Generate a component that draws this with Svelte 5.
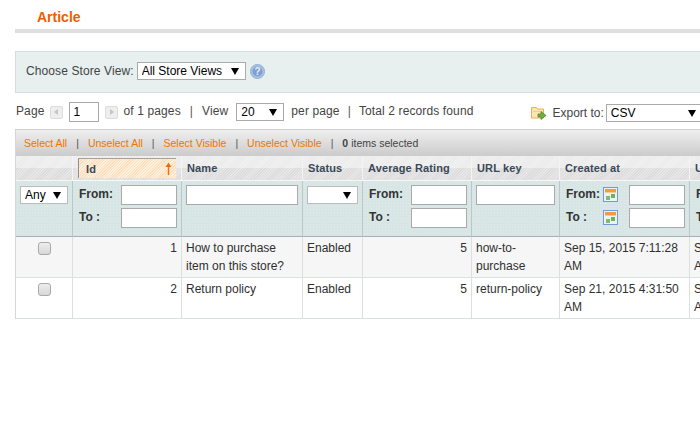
<script>
    const columns = [
        { name: "", width: 57 },
        { name: "Id", width: 109, sorted: true },
        { name: "Name", width: 121 },
        { name: "Status", width: 60 },
        { name: "Average Rating", width: 109 },
        { name: "URL key", width: 88 },
        { name: "Created at", width: 130 },
        { name: "Updated at", width: 130 }
    ];

    const rows = [
        {
            id: 1,
            name: "How to purchase item on this store?",
            status: "Enabled",
            rating: 5,
            url: "how-to-purchase",
            created: "Sep 15, 2015 7:11:28 AM",
            updated: "Sep 15, 2015 7:11:28 AM"
        },
        {
            id: 2,
            name: "Return policy",
            status: "Enabled",
            rating: 5,
            url: "return-policy",
            created: "Sep 21, 2015 4:31:50 AM",
            updated: "Sep 21, 2015 4:31:50 AM"
        }
    ];

    const massActions = ["Select All", "Unselect All", "Select Visible", "Unselect Visible"];
</script>

{#snippet calendar()}
    <svg class="cal" width="15" height="15" viewBox="0 0 15 15">
        <rect x="0.5" y="0.5" width="14" height="14" fill="#eef2f6" stroke="#6f9bd8" />
        <rect x="2" y="2" width="11" height="3" fill="#f39a3c" />
        <rect x="2" y="5" width="11" height="1" fill="#f7c9a0" />
        <rect x="3" y="9" width="4" height="4" fill="#7cbf6a" />
        <rect x="8" y="7" width="4" height="4" fill="#6db35c" />
    </svg>
{/snippet}

{#snippet range(dates)}
    <div class="range">
        <div class="range-row">
            <span class="range-label">From:</span>
            {#if dates}{@render calendar()}{/if}
            <input type="text" class="range-input" />
        </div>
        <div class="range-row">
            <span class="range-label">To :</span>
            {#if dates}{@render calendar()}{/if}
            <input type="text" class="range-input" />
        </div>
    </div>
{/snippet}

<div class="page">
    <div class="title-bar">
        <h3>Article</h3>
    </div>

    <div class="store-switcher">
        <label for="store">Choose Store View:</label>
        <span class="sel store-sel">
            <select id="store"><option>All Store Views</option></select>
        </span>
        <svg class="help" width="15" height="15" viewBox="0 0 15 15">
            <circle cx="7.5" cy="7.5" r="7" fill="#a9c3e2" stroke="#8fb0d6" />
            <circle cx="7.5" cy="7.5" r="5" fill="#7f9fcd" />
            <text x="7.5" y="11" text-anchor="middle" font-size="10" font-weight="bold" fill="#e6eef8" font-family="Liberation Sans, sans-serif">?</text>
        </svg>
    </div>

    <div class="pager">
        <span class="txt">Page</span>
        <span class="pg-btn prev"></span>
        <input class="pg-input" type="text" value="1" />
        <span class="pg-btn next"></span>
        <span class="txt">of 1 pages</span>
        <span class="txt sep">|</span>
        <span class="txt">View</span>
        <span class="sel view-sel">
            <select><option>20</option></select>
        </span>
        <span class="txt">per page</span>
        <span class="txt sep tight">|</span>
        <span class="txt">Total 2 records found</span>
        <span class="export">
            <svg width="16" height="16" viewBox="0 0 16 16">
                <path d="M0.5 2.5h5l1 1.5h6v9h-12z" fill="#fbe6b0" stroke="#e2b05c" />
                <path d="M2 6h9v1H2z" fill="#f3cf86" />
                <path d="M7 9h3V6.5l5 4-5 4V12H7z" fill="#74ad45" stroke="#4c8a2b" stroke-width="0.8" />
            </svg>
            <span class="export-label">Export to:</span>
            <span class="sel export-sel">
                <select><option>CSV</option></select>
            </span>
        </span>
    </div>

    <div class="massaction">
        {#each massActions as action}
            <a href="#top" class="mass-link">{action}</a>
            <span class="mass-sep">|</span>
        {/each}
        <strong>0</strong>&nbsp;<span>items selected</span>
    </div>

    <table>
        <colgroup>
            {#each columns as col}
                <col style="width: {col.width}px" />
            {/each}
        </colgroup>
        <thead>
            <tr class="headings">
                {#each columns as col}
                    <th>
                        {#if col.sorted}
                            <span class="sort">{col.name}<span class="sort-arrow">
                                <svg width="7" height="13" viewBox="0 0 7 13">
                                    <path d="M3.5 0.5L6.5 5H4.2V13H2.8V5H0.5z" fill="#f26c0d" />
                                </svg>
                            </span></span>
                        {:else}
                            <span class="head-label">{col.name}</span>
                        {/if}
                    </th>
                {/each}
            </tr>
            <tr class="filter">
                <th>
                    <span class="sel any-sel"><select><option>Any</option></select></span>
                </th>
                <th>{@render range(false)}</th>
                <th><input type="text" class="text-filter" /></th>
                <th><span class="sel status-sel"><select><option></option></select></span></th>
                <th>{@render range(false)}</th>
                <th><input type="text" class="text-filter" /></th>
                <th>{@render range(true)}</th>
                <th>{@render range(true)}</th>
            </tr>
        </thead>
        <tbody>
            {#each rows as row, i}
                <tr class:even={i % 2 === 0}>
                    <td class="check"><input type="checkbox" /></td>
                    <td class="num">{row.id}</td>
                    <td>{row.name}</td>
                    <td>{row.status}</td>
                    <td class="num">{row.rating}</td>
                    <td>{row.url}</td>
                    <td>{row.created}</td>
                    <td>{row.updated}</td>
                </tr>
            {/each}
        </tbody>
    </table>
</div>

<style>
    :global(body) {
        margin: 0;
        background: #fff;
        overflow: hidden;
    }

    .page {
        width: 1000px;
        padding-left: 15px;
        font: 12px/18px "Liberation Sans", Arial, sans-serif;
        color: #2f2f2f;
    }

    .title-bar {
        height: 29px;
        border-bottom: 4px solid #dfdfdf;
        box-sizing: content-box;
    }

    h3 {
        margin: 0;
        padding: 8px 0 0 22px;
        font-size: 14px;
        line-height: 18px;
        font-weight: bold;
        color: #eb5e00;
    }

    .store-switcher {
        display: flex;
        align-items: center;
        box-sizing: border-box;
        height: 42px;
        margin-top: 18px;
        padding: 0 0 2px 10px;
        background: #e7efef;
        border: 1px solid #d6dedd;
        border-right: 0;
        color: #444;
    }

    .store-switcher label {
        margin-right: 3px;
        letter-spacing: 0.1px;
    }

    .help {
        margin-left: 4px;
    }

    .sel {
        position: relative;
        display: inline-block;
        vertical-align: top;
    }

    .sel::after {
        content: "";
        position: absolute;
        top: 6px;
        right: 7px;
        border-left: 4px solid transparent;
        border-right: 4px solid transparent;
        border-top: 7px solid #000;
        pointer-events: none;
    }

    select {
        display: block;
        appearance: none;
        width: 100%;
        height: 100%;
        box-sizing: border-box;
        margin: 0;
        padding: 0 0 0 4px;
        background: #fff;
        border: 1px solid #aaa;
        border-radius: 0;
        font: 12px "Liberation Sans", Arial, sans-serif;
        color: #000;
    }

    .store-sel { width: 109px; height: 18px; }
    .view-sel { width: 48px; height: 18px; margin: 0 7px 0 8px; }
    .export-sel { width: 97px; height: 18px; }
    .any-sel { width: 48px; height: 18px; }
    .status-sel { width: 51px; height: 18px; }
    .any-sel select, .status-sel select { border-color: #bbb; }

    .pager {
        display: flex;
        align-items: center;
        height: 20px;
        margin-top: 9px;
        padding-left: 1px;
        color: #444;
    }

    .txt {
        padding-bottom: 2px;
        letter-spacing: 0.12px;
    }

    .pg-btn {
        position: relative;
        box-sizing: border-box;
        width: 13px;
        height: 13px;
        background: #eee;
        border: 1px solid #ddd;
        border-radius: 2px;
    }

    .pg-btn.prev { margin: 0 6px 0 5px; }
    .pg-btn.next { margin: 0 6px; }

    .pg-btn::after {
        content: "";
        position: absolute;
        top: 2px;
        border-top: 3px solid transparent;
        border-bottom: 3px solid transparent;
    }

    .pg-btn.prev::after { left: 3px; border-right: 4px solid #c4c4c4; }
    .pg-btn.next::after { left: 4px; border-left: 4px solid #c4c4c4; }

    .pg-input {
        box-sizing: border-box;
        width: 30px;
        height: 20px;
        margin: 0;
        padding: 0 4px;
        border: 1px solid #aaa;
        font: 12px "Liberation Sans", Arial, sans-serif;
        color: #000;
    }

    .sep { margin: 0 9px; color: #555; }
    .sep.tight { margin: 0 8px; }

    .export {
        display: flex;
        align-items: center;
        margin-left: 58px;
        padding-top: 2px;
    }

    .export-label { margin: 0 2px 1px 5px; }

    .massaction {
        display: flex;
        align-items: center;
        box-sizing: border-box;
        height: 27px;
        margin-top: 7px;
        padding: 0 0 1px 8px;
        background: linear-gradient(#efefef, #cbcbcb);
        border-top: 1px solid #cfcfcf;
        border-left: 1px solid #d6d6d6;
        font-size: 10.5px;
        color: #444;
    }

    .mass-link {
        color: #ea7601;
        text-decoration: none;
    }

    .mass-sep {
        margin: 0 9px;
        color: #555;
    }

    .massaction strong {
        font-weight: bold;
    }

    table {
        table-layout: fixed;
        width: 805px;
        border-collapse: separate;
        border-spacing: 0;
        border-left: 1px solid #d6d6d6;
    }

    th {
        padding: 0;
        text-align: left;
        vertical-align: top;
    }

    .headings th {
        height: 24px;
        border-right: 1px solid #f4f4f4;
        border-bottom: 1px solid #f8f8f8;
        background:
            repeating-linear-gradient(135deg, rgba(255, 255, 255, 0.3) 0 1px, transparent 1px 2px),
            linear-gradient(#ebebeb 0 50%, #dcdcdc 50% 100%);
        font-size: 11px;
        line-height: 24px;
        letter-spacing: 0.12px;
        color: #3a4859;
    }

    .head-label {
        padding-left: 5px;
    }

    .sort {
        display: flex;
        justify-content: space-between;
        align-items: center;
        box-sizing: border-box;
        height: 20px;
        margin: 2px 5px 2px 5px;
        padding: 0 4px 0 7px;
        line-height: 20px;
        border-top: 1px solid #a99f94;
        border-left: 1px solid #8f8f8f;
        background: repeating-linear-gradient(135deg, #fbdfbe 0 1px, #fff0de 1px 2px);
    }

    .sort-arrow {
        display: flex;
    }

    .filter th {
        height: 56px;
        box-sizing: border-box;
        padding: 4px 4px 0;
        border-right: 1px solid #bcc8c8;
        border-bottom: 1px solid #a8b0b0;
        background-color: #d7e5e5;
        background-image: radial-gradient(#e0ebeb 0.6px, transparent 0.7px);
        background-size: 3px 3px;
        font-size: 12px;
        color: #333;
    }

    .filter .sel {
        margin-top: 1px;
    }

    .range-row {
        display: flex;
        align-items: center;
        height: 20px;
        margin-bottom: 3px;
    }

    .range-row:last-child { margin-bottom: 0; }

    .range-label {
        padding: 0 0 3px 2px;
        font-weight: bold;
        line-height: 18px;
        white-space: nowrap;
    }

    .range-input {
        box-sizing: border-box;
        width: 56px;
        height: 20px;
        margin: 0 0 0 auto;
        border: 1px solid #aaa;
        background: #fff;
    }

    .cal {
        position: absolute;
        margin: -1px 0 0 39px;
    }

    .text-filter {
        display: block;
        box-sizing: border-box;
        width: 100%;
        height: 20px;
        margin: 0;
        border: 1px solid #aaa;
        background: #fff;
    }

    td {
        padding: 2px 4px 2px 4px;
        vertical-align: top;
        border-right: 1px solid #dadfe0;
        border-bottom: 1px solid #dadfe0;
        line-height: 18px;
        color: #2f2f2f;
        height: 36px;
        box-sizing: content-box;
    }

    tr.even td {
        background: #f6f6f6;
    }

    .num {
        text-align: right;
    }

    .check input {
        appearance: none;
        display: block;
        width: 13px;
        height: 13px;
        margin: 3px 0 0 18px;
        border: 1px solid #a9a9a9;
        border-radius: 3px;
        background: linear-gradient(#ededed, #d8d8d8);
        box-sizing: border-box;
    }
</style>
